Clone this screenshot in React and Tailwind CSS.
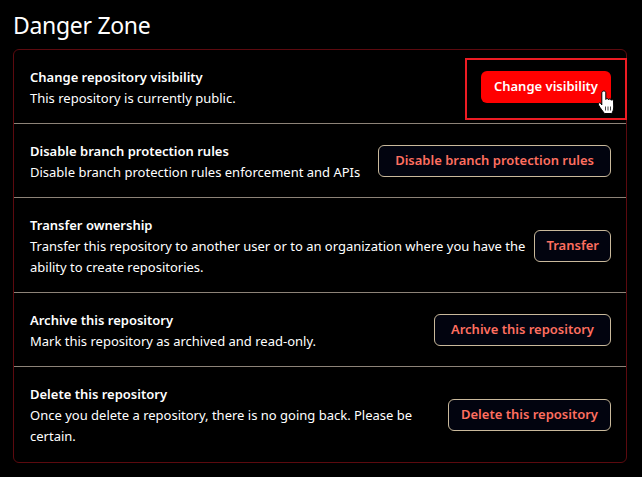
const rows = [
  { title: "Change repository visibility", text: "This repository is currently public.", button: "Change visibility", solid: true },
  { title: "Disable branch protection rules", text: "Disable branch protection rules enforcement and APIs", button: "Disable branch protection rules", pad: "px-[16px]" },
  { title: "Transfer ownership", text: "Transfer this repository to another user or to an organization where you have the ability to create repositories.", button: "Transfer", pad: "px-[11px]" },
  { title: "Archive this repository", text: "Mark this repository as archived and read-only.", button: "Archive this repository", pad: "px-[16px]" },
  { title: "Delete this repository", text: "Once you delete a repository, there is no going back. Please be certain.", button: "Delete this repository", pad: "px-[12px]" },
]

function HandCursor() {
  return (
    <svg className="absolute left-[597px] top-[90px]" width="20" height="25" viewBox="0 0 20 25">
      <path
        d="M4.800 2.800c0-2.400 4-2.400 4 0v6.700c.4-1.400 2.500-1.300 2.700.3.400-1.300 2.400-1.200 2.600.5.500-1 2.300-.9 2.400.7l.2 6c0 2.800-1 5-2 6.500H7.500C6 21.500 3.500 18.500 1.500 15c-.9-1.700 1.100-3 2.300-1.600l1 1.600z"
        fill="#fff"
        stroke="#000"
        strokeWidth="1"
      />
      <path d="M8.500 16.500v4M11 16.500v4M13.500 16.500v4" stroke="#444" strokeWidth="1" />
    </svg>
  )
}

export default function App() {
  return (
    <main className="relative h-[477px] w-[642px] overflow-hidden bg-black px-[13px] font-['Segoe_UI','Noto_Sans',sans-serif] text-white">
      <h2 className="h-[49px] pt-[9px] text-[23px] leading-8 tracking-[-0.3px]">Danger Zone</h2>

      <div className="w-[614px] rounded-md border border-[#5c0a0f]">
        {rows.map((row) => (
          <div key={row.title} className="flex items-center justify-between gap-1 border-b border-[#8d8378] pt-4 pr-[15px] pb-[15px] pl-4 last:border-b-0 last:pb-4">
            <div className="-mb-px min-w-0 flex-1 pt-px text-[13px] leading-[21px]">
              <div className="font-semibold">{row.title}</div>
              <p>{row.text}</p>
            </div>
            <button
              className={
                row.solid
                  ? "h-8 shrink-0 rounded-md bg-[#ff0000] px-[13px] text-[13px] font-semibold text-white"
                  : `h-8 shrink-0 rounded-md border border-[#c9b99b] bg-[#02040f] ${row.pad} text-[13px] font-semibold text-[#ff6f60]`
              }
            >
              {row.button}
            </button>
          </div>
        ))}
      </div>

      {/* highlight around the first button */}
      <div className="absolute left-[465px] top-[58px] h-[62px] w-[162px] border-2 border-[#ed1c24]" />
      <HandCursor />
    </main>
  )
}
